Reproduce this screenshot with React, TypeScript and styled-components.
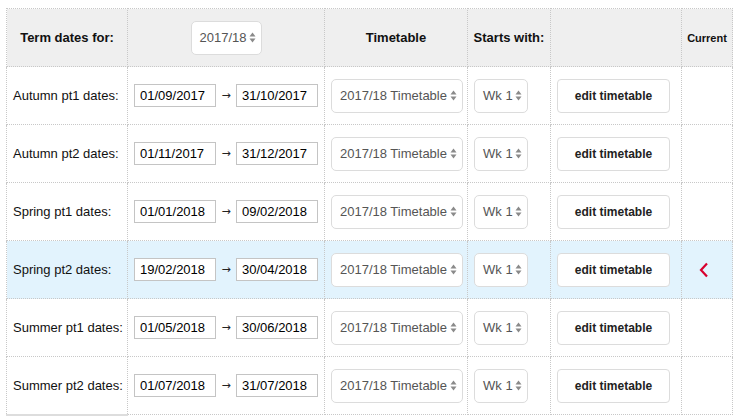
import styled, { createGlobalStyle } from "styled-components";

const GlobalStyle = createGlobalStyle`
  body {
    margin: 8px 0 0 6px;
    font-family: "Liberation Sans", Arial, sans-serif;
    color: #111;
    background: #fff;
  }
`;

const terms = [
  { label: "Autumn pt1 dates:", from: "01/09/2017", to: "31/10/2017" },
  { label: "Autumn pt2 dates:", from: "01/11/2017", to: "31/12/2017" },
  { label: "Spring pt1 dates:", from: "01/01/2018", to: "09/02/2018" },
  { label: "Spring pt2 dates:", from: "19/02/2018", to: "30/04/2018", current: true },
  { label: "Summer pt1 dates:", from: "01/05/2018", to: "30/06/2018" },
  { label: "Summer pt2 dates:", from: "01/07/2018", to: "31/07/2018" },
];

const Table = styled.table`
  border-collapse: collapse;
  width: 727px;
  table-layout: fixed;
  font-size: 13px;
`;

const HeadRow = styled.tr`
  background: #efefef;
  height: 58px;
`;

const Row = styled.tr<{ $current?: boolean }>`
  height: 58px;
  background: ${(p) => (p.$current ? "#e2f3fd" : "transparent")};
`;

const Th = styled.th<{ $small?: boolean }>`
  border: 1px dotted #c8c8c8;
  padding: 0 4px;
  text-align: center;
  vertical-align: middle;
  white-space: nowrap;
  font-weight: bold;
  font-size: ${(p) => (p.$small ? "11px" : "13px")};
  color: #111;
`;

const Td = styled.td`
  border: 1px dotted #c8c8c8;
  padding: 0 6px;
  vertical-align: middle;
  text-align: left;
  white-space: nowrap;
`;

const LastRow = styled(Row)`
  td:first-child {
    border-bottom: 2px solid #ddd;
  }
`;

const DateRange = styled.div`
  display: flex;
  align-items: center;
`;

const DateInput = styled.input`
  width: 82px;
  height: 23px;
  box-sizing: border-box;
  border: 1px solid #c4c4c4;
  border-radius: 0;
  padding: 0 5px;
  font-family: "Liberation Sans", Arial, sans-serif;
  font-size: 13px;
  color: #000;
  background: #fff;
  outline: none;
`;

const Arrow = styled.span`
  width: 21px;
  text-align: center;
  font-family: "DejaVu Sans", sans-serif;
  font-size: 11px;
  color: #222;
`;

const SelectBox = styled.div<{ $width: number }>`
  display: inline-flex;
  align-items: center;
  justify-content: space-between;
  box-sizing: border-box;
  width: ${(p) => p.$width}px;
  height: 34px;
  padding: 0 5px 0 8px;
  border: 1px solid #dcdcdc;
  border-radius: 5px;
  background: #fff;
  color: #555;
  font-size: 13px;
  font-weight: normal;
`;

const Button = styled.button`
  width: 113px;
  height: 34px;
  box-sizing: border-box;
  border: 1px solid #dcdcdc;
  border-radius: 4px;
  background: #fff;
  font-family: "Liberation Sans", Arial, sans-serif;
  font-size: 12px;
  font-weight: bold;
  color: #222;
  padding: 0;
`;

const Chevron = styled.svg`
  display: block;
  margin: 0 auto 0 11px;
`;

const UpDown = () => (
  <svg width="7" height="11" viewBox="0 0 7 11">
    <path d="M3.5 0.5 L6.5 4.5 H0.5 Z" fill="#8a8a8a" />
    <path d="M3.5 10.5 L6.5 6.5 H0.5 Z" fill="#8a8a8a" />
  </svg>
);

const Select = ({ text, width }: { text: string; width: number }) => (
  <SelectBox $width={width}>
    <span>{text}</span>
    <UpDown />
  </SelectBox>
);

export default function App() {
  return (
    <>
      <GlobalStyle />
      <Table>
        <colgroup>
          <col style={{ width: 121 }} />
          <col style={{ width: 197 }} />
          <col style={{ width: 143 }} />
          <col style={{ width: 83 }} />
          <col style={{ width: 131 }} />
          <col style={{ width: 51 }} />
        </colgroup>
        <thead>
          <HeadRow>
            <Th>Term dates for:</Th>
            <Th>
              <Select text="2017/18" width={71} />
            </Th>
            <Th>Timetable</Th>
            <Th>Starts with:</Th>
            <Th />
            <Th $small>Current</Th>
          </HeadRow>
        </thead>
        <tbody>
          {terms.map((t, i) => {
            const R = i === terms.length - 1 ? LastRow : Row;
            return (
              <R key={t.label} $current={t.current}>
                <Td>{t.label}</Td>
                <Td>
                  <DateRange>
                    <DateInput readOnly value={t.from} />
                    <Arrow>→</Arrow>
                    <DateInput readOnly value={t.to} />
                  </DateRange>
                </Td>
                <Td>
                  <Select text="2017/18 Timetable" width={132} />
                </Td>
                <Td>
                  <Select text="Wk 1" width={54} />
                </Td>
                <Td>
                  <Button>edit timetable</Button>
                </Td>
                <Td>
                  {t.current && (
                    <Chevron width="10" height="16" viewBox="0 0 10 16">
                      <path d="M8 1.5 L2 8 L8 14.5" fill="none" stroke="#d8002e" strokeWidth="2.2" />
                    </Chevron>
                  )}
                </Td>
              </R>
            );
          })}
        </tbody>
      </Table>
    </>
  );
}
